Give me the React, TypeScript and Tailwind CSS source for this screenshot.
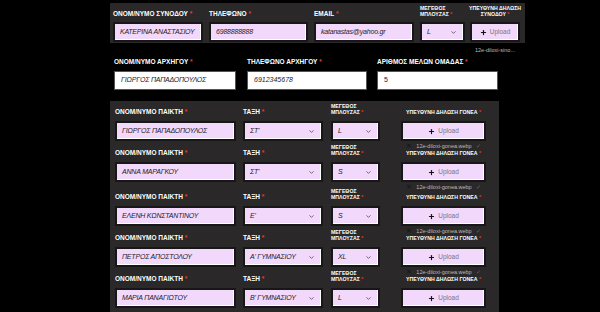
import { Plus, ChevronDown } from "lucide-react";

type Kind = "text" | "select" | "upload";

function Label({ text, small, center }: { text: string; small?: boolean; center?: boolean }) {
  return (
    <span
      className={`font-bold text-white uppercase whitespace-pre ${small ? "text-[5.2px] leading-[6px]" : "text-[6.5px] leading-[7px]"} ${center ? "text-center" : ""}`}
    >
      {text}
      <span className="text-[#e53935]"> *</span>
    </span>
  );
}

function PinkField({ value, kind }: { value?: string; kind: Kind }) {
  if (kind === "upload") {
    return (
      <div className="h-[20px] bg-[#f2d9fb] border-2 border-[#171717] shadow-[inset_-1px_-1px_0_#ffffff] flex items-center justify-center gap-[3px]">
        <Plus size={7} strokeWidth={4} color="#111" />
        <span className="text-[6.5px] text-[#7a7380]">Upload</span>
      </div>
    );
  }
  return (
    <div className="h-[20px] bg-[#f2d9fb] border-2 border-[#171717] shadow-[inset_-1px_-1px_0_#ffffff] flex items-center justify-between pl-[5px] pr-[6px]">
      <span className="text-[7px] italic text-[#1d1a1f] tracking-[-0.2px] whitespace-nowrap">{value}</span>
      {kind === "select" && <ChevronDown size={7} strokeWidth={2.5} color="#444" />}
    </div>
  );
}

const players = [
  { name: "ΓΙΩΡΓΟΣ ΠΑΠΑΔΟΠΟΥΛΟΣ", cls: "ΣΤ'", size: "L", mt: "mt-0", file: true },
  { name: "ΑΝΝΑ ΜΑΡΑΓΚΟΥ", cls: "ΣΤ'", size: "S", mt: "mt-0", file: true },
  { name: "ΕΛΕΝΗ ΚΩΝΣΤΑΝΤΙΝΟΥ", cls: "Ε'", size: "S", mt: "mt-[3px]", file: true },
  { name: "ΠΕΤΡΟΣ ΑΠΟΣΤΟΛΟΥ", cls: "Α' ΓΥΜΝΑΣΙΟΥ", size: "XL", mt: "mt-0", file: true },
  { name: "ΜΑΡΙΑ ΠΑΝΑΓΙΩΤΟΥ", cls: "Β' ΓΥΜΝΑΣΙΟΥ", size: "L", mt: "mt-0", file: false },
];

export default function App() {
  return (
    <div className="w-[600px] h-[312px] bg-black overflow-hidden font-['Liberation_Sans',Arial,sans-serif]">
      {/* companion */}
      <div className="ml-[110px] mt-[3px] w-[415px] h-[40px] bg-[#2a2828] flex pl-[3px]">
        <div className="w-[90px] flex flex-col">
          <div className="h-[19px] flex items-end pb-[5px]"><Label text="ΟΝΟΜ/ΝΥΜΟ ΣΥΝΟΔΟΥ" /></div>
          <PinkField value="ΚΑΤΕΡΙΝΑ ΑΝΑΣΤΑΣΙΟΥ" kind="text" />
        </div>
        <div className="ml-[6px] w-[99px] flex flex-col">
          <div className="h-[19px] flex items-end pb-[5px]"><Label text="ΤΗΛΕΦΩΝΟ" /></div>
          <PinkField value="6988888888" kind="text" />
        </div>
        <div className="ml-[6px] w-[100px] flex flex-col">
          <div className="h-[19px] flex items-end pb-[5px]"><Label text="EMAIL" /></div>
          <PinkField value="katanastas@yahoo.gr" kind="text" />
        </div>
        <div className="ml-[6px] w-[45px] flex flex-col">
          <div className="h-[19px] flex items-end pb-[5px]"><Label small text={"ΜΕΓΕΘΟΣ\nΜΠΛΟΥΖΑΣ"} /></div>
          <PinkField value="L" kind="select" />
        </div>
        <div className="ml-[5px] w-[50px] flex flex-col relative">
          <div className="h-[19px] flex items-end justify-center pb-[5px] overflow-visible"><Label small center text={"ΥΠΕΥΘΥΝΗ ΔΗΛΩΣΗ\nΣΥΝΟΔΟΥ"} /></div>
          <PinkField kind="upload" />
          <span className="absolute top-[43px] left-0 right-0 text-center text-[5.5px] text-[#bdbdbd] whitespace-nowrap">12e-diloxi-sino...</span>
        </div>
      </div>

      {/* leader */}
      <div className="ml-[114px] mt-[9px] flex">
        <div className="w-[122px] flex flex-col">
          <div className="h-[19px] flex items-end pb-[6px]"><Label text="ΟΝΟΜ/ΝΥΜΟ ΑΡΧΗΓΟΥ" /></div>
          <div className="h-[19px] bg-white border border-[#555] flex items-center pl-[6px]">
            <span className="text-[7px] italic text-[#222] tracking-[-0.2px]">ΓΙΩΡΓΟΣ ΠΑΠΑΔΟΠΟΥΛΟΣ</span>
          </div>
        </div>
        <div className="ml-[11px] w-[120px] flex flex-col">
          <div className="h-[19px] flex items-end pb-[6px]"><Label text="ΤΗΛΕΦΩΝΟ ΑΡΧΗΓΟΥ" /></div>
          <div className="h-[19px] bg-white border border-[#555] flex items-center pl-[6px]">
            <span className="text-[7px] italic text-[#222]">6912345678</span>
          </div>
        </div>
        <div className="ml-[10px] w-[121px] flex flex-col">
          <div className="h-[19px] flex items-end pb-[6px]"><Label text="ΑΡΙΘΜΟΣ ΜΕΛΩΝ ΟΜΑΔΑΣ" /></div>
          <div className="h-[19px] bg-white border border-[#555] flex items-center pl-[6px]">
            <span className="text-[7px] text-[#222]">5</span>
          </div>
        </div>
      </div>

      {/* players */}
      <div className="ml-[110px] mt-[11px] w-[389px] h-[220px] bg-[#2a2828] pl-[5px] flex flex-col gap-[1px]">
        {players.map((p, i) => (
          <div key={i} className={`flex ${p.mt}`}>
            <div className="w-[121px] flex flex-col">
              <div className="h-[20px] flex items-end pb-[6px]"><Label text="ΟΝΟΜ/ΝΥΜΟ ΠΑΙΚΤΗ" /></div>
              <PinkField value={p.name} kind="text" />
            </div>
            <div className="ml-[7px] w-[80px] flex flex-col">
              <div className="h-[20px] flex items-end pb-[6px]"><Label text="ΤΑΞΗ" /></div>
              <PinkField value={p.cls} kind="select" />
            </div>
            <div className="ml-[8px] w-[49px] flex flex-col">
              <div className="h-[20px] flex items-end pb-[6px]"><Label small text={"ΜΕΓΕΘΟΣ\nΜΠΛΟΥΖΑΣ"} /></div>
              <PinkField value={p.size} kind="select" />
            </div>
            <div className="ml-[21px] w-[85px] flex flex-col relative">
              <div className="h-[20px] flex items-end justify-center pb-[6px]"><Label small center text="ΥΠΕΥΘΥΝΗ ΔΗΛΩΣΗ ΓΟΝΕΑ" /></div>
              <PinkField kind="upload" />
              {p.file && (
                <div className="absolute top-[42px] left-0 right-0 flex justify-center items-center gap-[4px] text-[5.5px] leading-[6px] text-[#bdbdbd] whitespace-nowrap">
                  <span className="text-[#151515] text-[7px]">✕</span>
                  <span>12e-diloxi-gonea.webp</span>
                  <span className="text-[#666]">✓</span>
                </div>
              )}
            </div>
          </div>
        ))}
      </div>
    </div>
  );
}
